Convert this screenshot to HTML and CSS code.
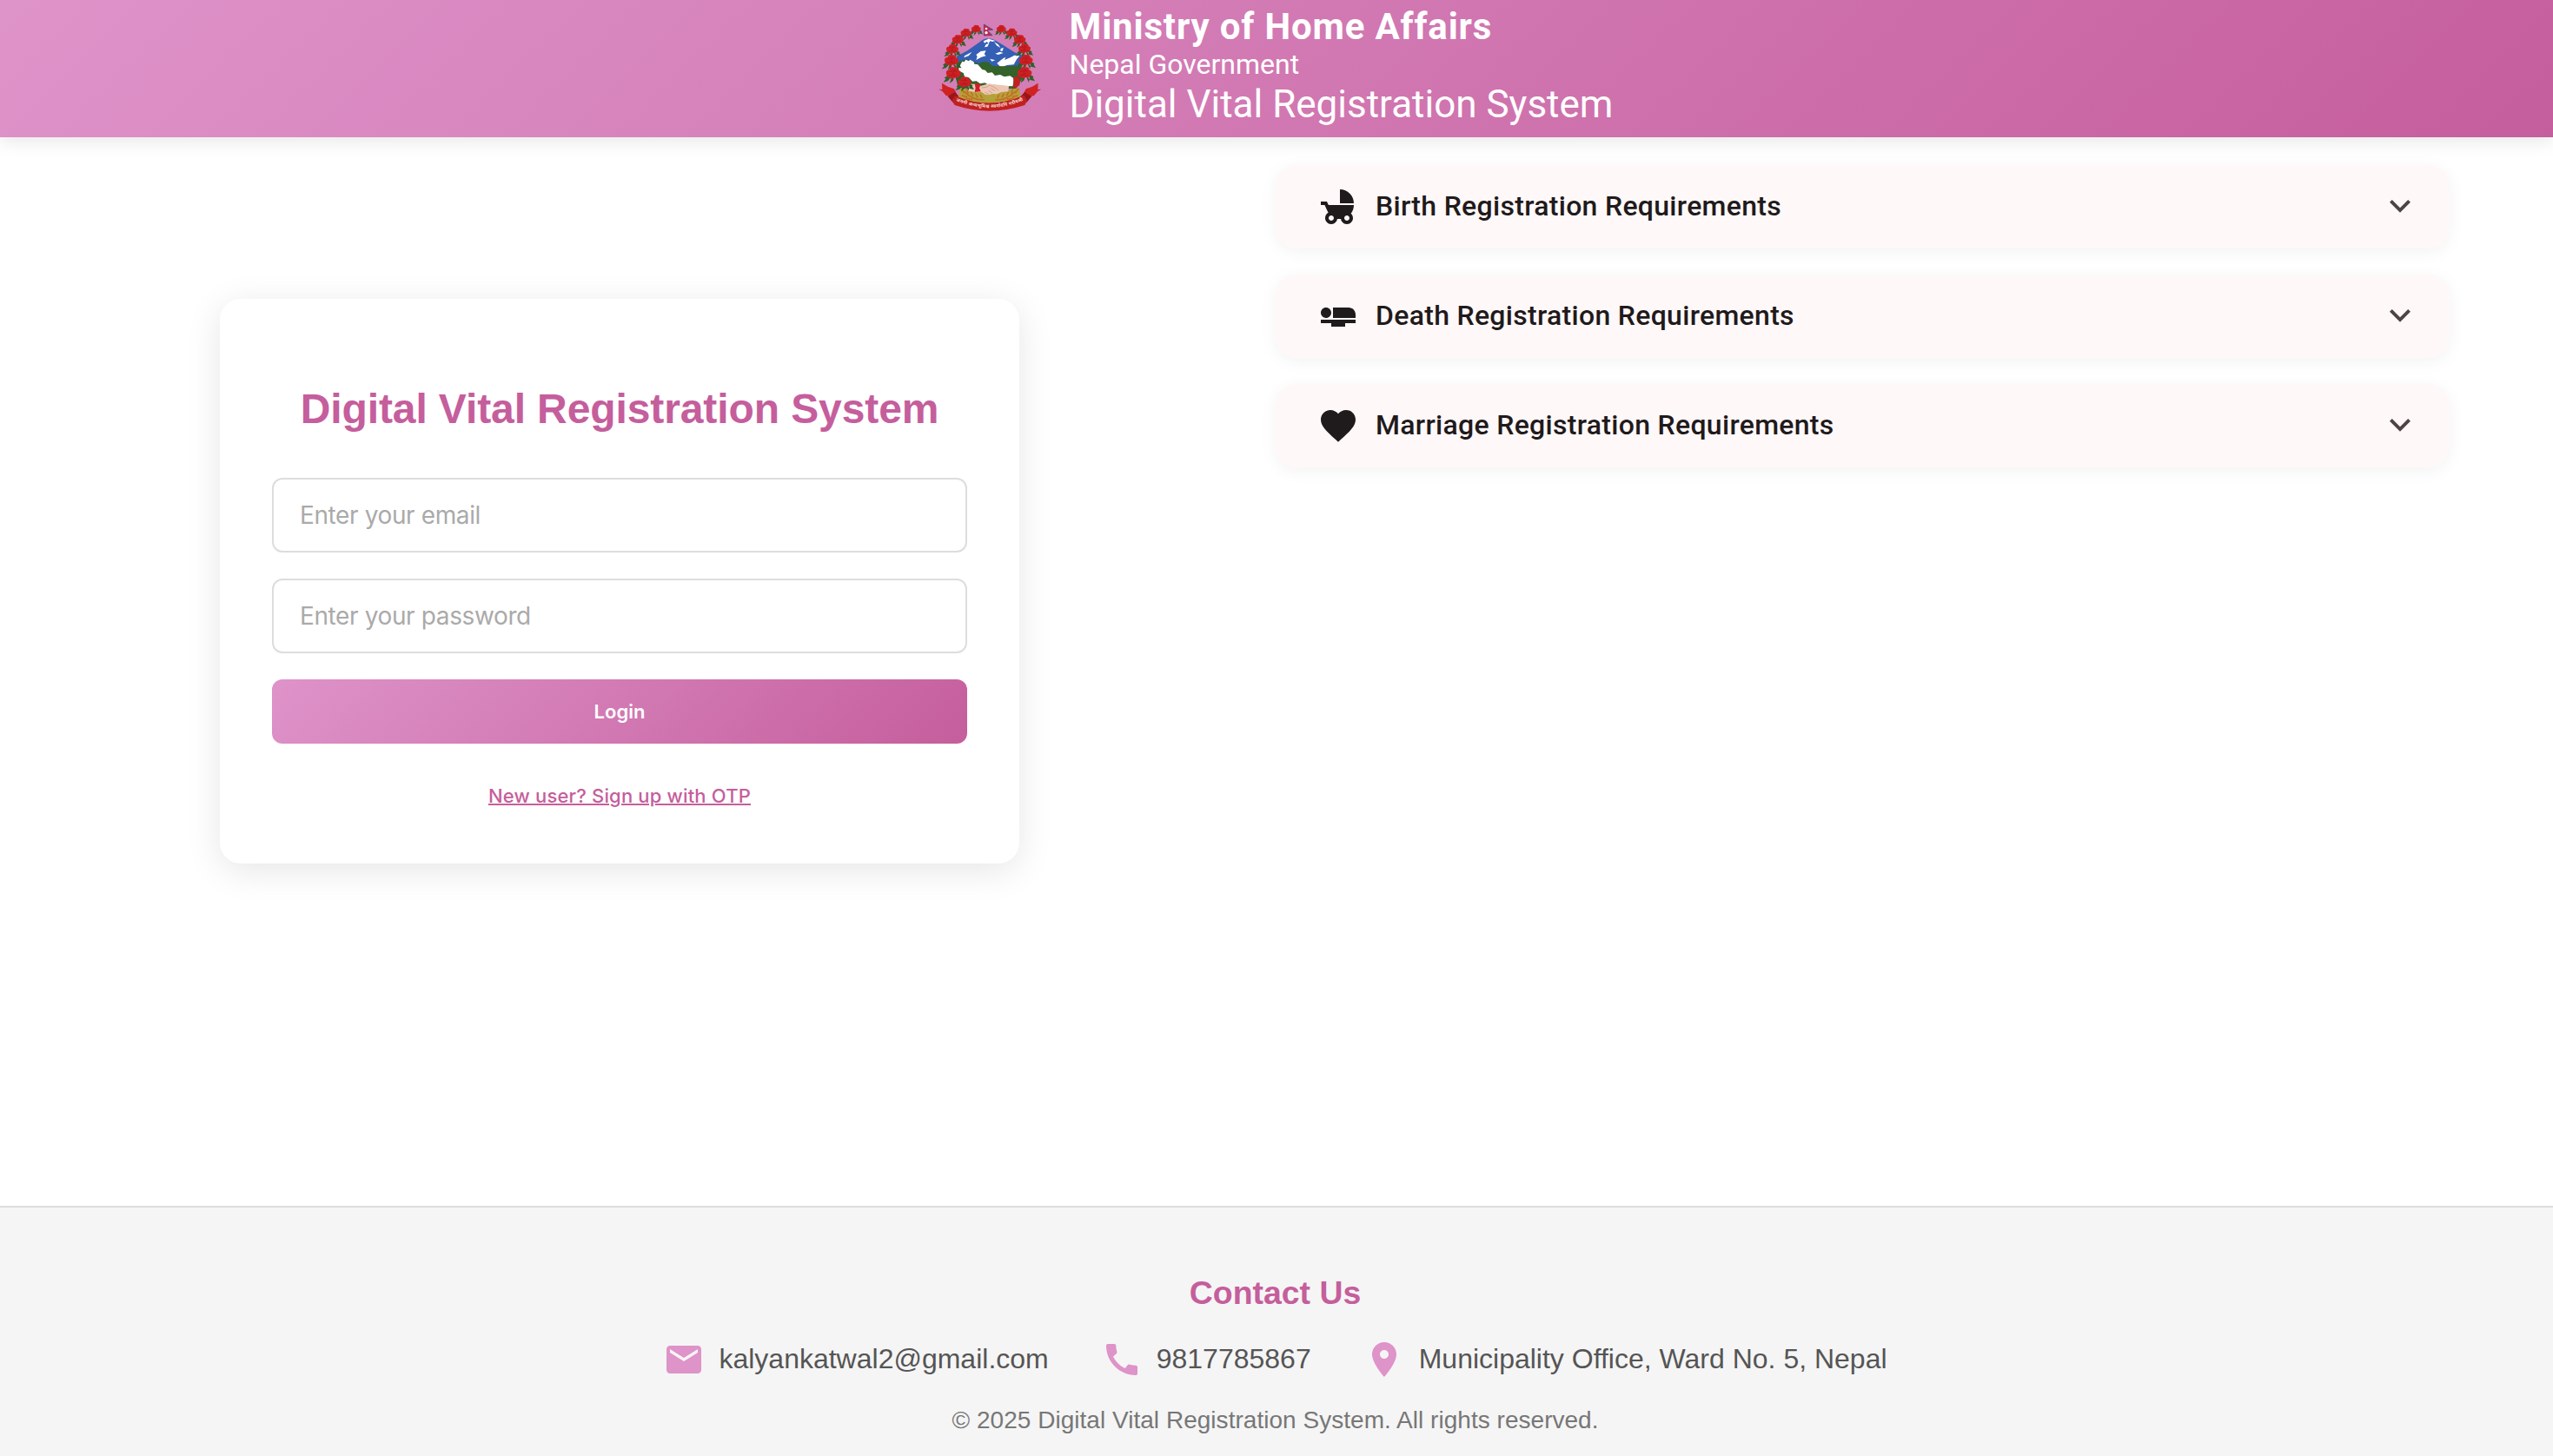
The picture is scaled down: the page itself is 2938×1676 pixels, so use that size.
FILE: index.html
```html
<!DOCTYPE html>
<html lang="en">
<head>
<meta charset="utf-8">
<title>Digital Vital Registration System</title>
<link rel="stylesheet" href="styles.css">
</head>
<body>
<header class="header">
  <svg class="emblem" viewBox="57 82 360 303" role="img" aria-label="Emblem of Nepal">
    <defs>
      <g id="flower">
        <path d="M-14 4l-12 8 4 3-7 10 13-4 8-9zM12 2l14 7-2 3 6 10-14-3-8-9zM-5 8l-6 20 10-8 3-12zM4 8l8 18 3-10-2-10z" fill="#2f5f2a"/>
        <path d="M-20 2c-3-7 2-13 8-12 1-8 10-11 14-7 7-3 12 2 12 8 7 1 9 8 5 13-2 8-10 9-14 7-6 5-13 4-16 0-5 1-9-3-9-9z" fill="#cf1f23"/>
        <path d="M-12-5q6-5 10 1 4-7 11-1M-14 4q6 6 11 0 6 7 14-1M-3-11q4 4 7-1M-4 2q4-5 8 0" fill="none" stroke="#94151a" stroke-width="1.6"/>
      </g>
      <path id="motto" d="M121 350Q236 397 354 348"/>
    </defs>
    <path d="M122 196L160 176 205 144q18-13 30-9 10-1 20 5l30 18 38 24 32 12-10 50-80 30-130-30z" fill="#345fb4"/>
    <path d="M215 143l18-8 24 7-12 3-6-3-6 9-6-6-8 5zM252 146l14 8 8 12-12-7zM224 154l11-4-6 12-10 2zM190 190l16-12 18-2-6 12 6 6-16 4-18 10 4-12zM150 194l26-14-12 14-16 6zM256 186l16-6 12 4-18 6zM274 170l10-5-2 11-7 3zM262 219l22-17 8-4-4 10 20-8 14-8 18 2-10 12-10 18-24 2-20 8zM238 204l18 5-12 4z" fill="#fff"/>
    <path d="M128 214l30-8 42 15q10-9 24-7 12 1 20 14l40 2 60-3 8 40-24 40-200-1-12-55z" fill="#33622b"/>
    <path d="M134 303l60 13 60 2 84-13 8 38q-108 48-218 5z" fill="#b3a13a"/>
    <path d="M137 222l5-9 7 2 5-8 11 5 4-5 13 8 2 7 12 2 15 17 10 2 9 10 15-2 10 11 18-3 14 7 20-3 13 9-3 27-24-1-14 3-23-7-22 1-14-8-16 3-13-9-14 1-12-13-14-2-5-14-15-7-1-9z" fill="#fff"/>
    <path d="M165 291l24 0 18 6 27-7 20 3 26 2 23 3-2 19-24 2-16 7-14-1-14 4-12-2-13-9-16 2-30-5z" fill="#edc7b4"/>
    <path d="M209 304l17-2 10-7 16 7 16 12M220 319l14 7M232 314l14 8M241 307l14 8" fill="none" stroke="#c68e78" stroke-width="2"/>
    <path d="M185 289l22 2-6 14 5 12-21 2 3-14z" fill="#d01f25"/>
    <g stroke="#c46f25" stroke-width="5" stroke-linecap="round" fill="none">
      <path d="M139 308l9 13M150 318l13 12M163 330l14 7M177 339l18 5M195 344l22 2M158 310l4 12M173 320l5 10M189 326l5 10M205 329l5 9M142 331l15 4M155 340l20 4M335 308l-9 13M324 318l-13 12M311 330l-14 7M297 339l-18 5M279 344l-22 2M316 310l-4 12M301 320l-5 10M285 326l-5 10M269 329l-5 9M332 331l-15 4M319 340l-20 4"/>
    </g>
    <path d="M61 309l12 1-1-22 20 12 22 8 14 26-18 16-12-16-12-3-12-14zM415 309l-12 1 1-22-20 12-22 8-14 26 18 16 12-16 12-3 12-14z" fill="#cf2222"/>
    <path d="M92 334l24-15 14 14-20 22zM382 334l-24-15-14 14 20 22z" fill="#961719"/>
    <path d="M118 332l4 1q114 48 230-2l4-1 10 18-8 16q-122 40-242 0l-10-16z" fill="#c12020"/>
    <g>
      <use href="#flower" transform="translate(190 102) scale(.78)"/>
      <use href="#flower" transform="translate(155 116) scale(.88)"/>
      <use href="#flower" transform="translate(127 139) scale(.96)"/>
      <use href="#flower" transform="translate(108 172)"/>
      <use href="#flower" transform="translate(105 211) scale(1.15)"/>
      <use href="#flower" transform="translate(112 255) scale(1.22)"/>
      <use href="#flower" transform="translate(150 286) scale(1.1)"/>
      <use href="#flower" transform="translate(277 102) scale(.78)"/>
      <use href="#flower" transform="translate(313 115) scale(.88)"/>
      <use href="#flower" transform="translate(341 139) scale(.96)"/>
      <use href="#flower" transform="translate(357 170)"/>
      <use href="#flower" transform="translate(362 210) scale(1.12)"/>
      <use href="#flower" transform="translate(357 254) scale(1.2)"/>
    </g>
    <path d="M318 268l14-3 10 12-2 18-14 10-10-4 4-16z" fill="#c41f22"/>
    <path d="M217 85l31 19-20 1 18 18-29 1z" fill="#d3243f" stroke="#47468c" stroke-width="2.4"/>
    <circle cx="225" cy="100" r="4" fill="#fff"/><circle cx="225" cy="114" r="5" fill="#fff"/>
    <text class="motto"><textPath href="#motto" textLength="238">जननी जन्मभूमिश्च स्वर्गादपि गरीयसी</textPath></text>
  </svg>
  <div class="header-text">
    <div class="ministry">Ministry of Home Affairs</div>
    <div class="government">Nepal Government</div>
    <div class="system">Digital Vital Registration System</div>
  </div>
</header>

<main class="main">
  <section class="login-side">
    <form class="login-card">
      <h1 class="login-title">Digital Vital Registration System</h1>
      <input class="field" type="email" placeholder="Enter your email">
      <input class="field" type="password" placeholder="Enter your password">
      <button class="login-button" type="button">Login</button>
      <a class="signup" href="#">New user? Sign up with OTP</a>
    </form>
  </section>
  <section class="requirements">
    <div class="panel">
      <svg class="icon" viewBox="0 0 24 24"><path d="M13 2v8h8c0-4.42-3.58-8-8-8zm6.32 13.89C20.37 14.54 21 12.84 21 11H6.44l-.95-2H2v2h2.22s1.89 4.07 2.12 4.42c-1.1.59-1.84 1.75-1.84 3.08C4.5 20.43 6.07 22 8 22c1.76 0 3.22-1.3 3.46-3h2.08c.24 1.7 1.7 3 3.46 3 1.93 0 3.5-1.57 3.5-3.5 0-1.04-.46-1.97-1.18-2.61zM8 20c-.83 0-1.5-.67-1.5-1.5S7.17 17 8 17s1.5.67 1.5 1.5S8.83 20 8 20zm9 0c-.83 0-1.5-.67-1.5-1.5S16.17 17 17 17s1.5.67 1.5 1.5S17.83 20 17 20z"/></svg>
      <span class="panel-title">Birth Registration Requirements</span>
      <svg class="chevron" viewBox="0 -960 960 960"><path d="M480-345 240-585l56-56 184 184 184-184 56 56-240 240Z"/></svg>
    </div>
    <div class="panel">
      <svg class="icon" viewBox="0 0 24 24"><path d="M22 11v2H9V7h9c2.21 0 4 1.79 4 4zM2 14v2h6v2h8v-2h6v-2H2zm5.14-1.9c1.16-1.19 1.14-3.08-.04-4.24-1.19-1.16-3.08-1.14-4.24.04-1.16 1.19-1.14 3.08.04 4.24 1.19 1.16 3.08 1.14 4.24-.04z"/></svg>
      <span class="panel-title">Death Registration Requirements</span>
      <svg class="chevron" viewBox="0 -960 960 960"><path d="M480-345 240-585l56-56 184 184 184-184 56 56-240 240Z"/></svg>
    </div>
    <div class="panel">
      <svg class="icon" viewBox="0 0 24 24"><path d="M12 21.35l-1.45-1.32C5.4 15.36 2 12.28 2 8.5 2 5.42 4.42 3 7.5 3c1.74 0 3.41.81 4.5 2.09C13.09 3.81 14.76 3 16.5 3 19.58 3 22 5.42 22 8.5c0 3.78-3.4 6.86-8.55 11.54L12 21.35z"/></svg>
      <span class="panel-title">Marriage Registration Requirements</span>
      <svg class="chevron" viewBox="0 -960 960 960"><path d="M480-345 240-585l56-56 184 184 184-184 56 56-240 240Z"/></svg>
    </div>
  </section>
</main>

<footer class="footer">
  <h2 class="contact-title">Contact Us</h2>
  <div class="contacts">
    <div class="contact">
      <svg class="contact-icon" viewBox="0 0 24 24"><path d="M20 4H4c-1.1 0-1.99.9-1.99 2L2 18c0 1.1.9 2 2 2h16c1.1 0 2-.9 2-2V6c0-1.1-.9-2-2-2zm0 4l-8 5-8-5V6l8 5 8-5v2z"/></svg>
      <span class="contact-text">kalyankatwal2@gmail.com</span>
    </div>
    <div class="contact">
      <svg class="contact-icon" viewBox="0 0 24 24"><path d="M20.01 15.38c-1.23 0-2.42-.2-3.53-.56-.35-.12-.74-.03-1.01.24l-1.57 1.97c-2.83-1.35-5.48-3.9-6.89-6.83l1.95-1.66c.27-.28.35-.67.24-1.02-.37-1.11-.56-2.3-.56-3.53 0-.54-.45-.99-.99-.99H4.19C3.65 3 3 3.24 3 3.99 3 13.28 10.73 21 20.01 21c.71 0 .99-.63.99-1.18v-3.45c0-.54-.45-.99-.99-.99z"/></svg>
      <span class="contact-text">9817785867</span>
    </div>
    <div class="contact">
      <svg class="contact-icon" viewBox="0 0 24 24"><path d="M12 2C8.13 2 5 5.13 5 9c0 5.25 7 13 7 13s7-7.75 7-13c0-3.87-3.13-7-7-7zm0 9.5c-1.38 0-2.5-1.12-2.5-2.5s1.12-2.5 2.5-2.5 2.5 1.12 2.5 2.5-1.12 2.5-2.5 2.5z"/></svg>
      <span class="contact-text">Municipality Office, Ward No. 5, Nepal</span>
    </div>
  </div>
  <p class="copyright">© 2025 Digital Vital Registration System. All rights reserved.</p>
</footer>
</body>
</html>
```

FILE: styles.css
```css
* { box-sizing: border-box; }

body {
  margin: 0;
  height: 1676px;
  display: flex;
  flex-direction: column;
  background: #fff;
  font-family: "Liberation Sans", Arial, sans-serif;
}

.header {
  height: 158px;
  flex: none;
  display: flex;
  justify-content: center;
  align-items: flex-start;
  gap: 32px;
  padding-right: 3px;
  background: linear-gradient(135deg, #de93c9, #c55e9c);
  box-shadow: 0 4px 20px rgba(0, 0, 0, 0.1);
  color: #fff;
  font-family: Roboto, sans-serif;
}

.emblem { width: 120px; height: 101px; margin-top: 27px; }
.motto { font: bold 16px "Noto Sans Devanagari", "Noto Sans", sans-serif; fill: #f6dcd6; }

.header-text { padding-top: 5px; white-space: nowrap; }
.ministry { font-size: 42px; line-height: 51px; font-weight: 700; letter-spacing: 0.84px; }
.government { font-size: 32px; line-height: 36px; }
.system { font-size: 44px; line-height: 56px; }

.main {
  flex: 1;
  display: grid;
  grid-template-columns: 1468px 1351px;
  align-items: start;
}

.login-side {
  display: flex;
  justify-content: center;
  padding: 186px 42px 0 0;
}

.login-card {
  width: 920px;
  height: 650px;
  padding: 96px 60px 0;
  display: flex;
  flex-direction: column;
  align-items: center;
  background: #fff;
  border-radius: 24px;
  box-shadow: 0 8px 40px rgba(0, 0, 0, 0.1);
}

.login-title {
  margin: 0 0 48px;
  font-size: 48px;
  line-height: 62px;
  letter-spacing: -0.1px;
  color: #c55e9c;
  white-space: nowrap;
}

.field {
  width: 800px;
  height: 86px;
  margin: 0 0 30px;
  padding: 0 30px;
  border: 2px solid #ddd;
  border-radius: 12px;
  background: #fff;
  font: 28px Inter, sans-serif;
  letter-spacing: -0.38px;
}
.field::placeholder { color: #aaa; }

.login-button {
  width: 800px;
  height: 74px;
  border: 0;
  border-radius: 12px;
  background: linear-gradient(135deg, #de93c9, #c55e9c);
  color: #fff;
  font: 600 22px Inter, sans-serif;
}

.signup {
  margin-top: 46px;
  font: 500 22px/28px Inter, sans-serif;
  letter-spacing: 0.17px;
  color: #c55e9c;
  text-decoration: underline;
  text-decoration-thickness: 2px;
}

.requirements {
  display: flex;
  flex-direction: column;
  gap: 30px;
  padding-top: 32px;
}

.panel {
  height: 96px;
  padding: 0 33px 0 48px;
  display: flex;
  align-items: center;
  border-radius: 24px;
  background: #fff8f8;
  box-shadow: 0 4px 20px rgba(0, 0, 0, 0.05);
}
.icon { width: 48px; height: 48px; fill: #1f1a1c; }
.panel-title {
  flex: 1;
  margin-left: 19px;
  padding-bottom: 2px;
  font: 500 32px/48px Roboto, sans-serif;
  letter-spacing: 0.3px;
  color: #1f1a1c;
}
.chevron { width: 48px; height: 48px; fill: #4e4447; }

.footer {
  height: 288px;
  flex: none;
  display: flex;
  flex-direction: column;
  align-items: center;
  padding: 76px 3px 0 0;
  border-top: 2px solid #ddd;
  background: #f5f5f5;
}
.contact-title {
  margin: 0;
  font-size: 37.4px;
  line-height: 44px;
  color: #c55e9c;
}
.contacts {
  display: flex;
  gap: 60px;
  margin-top: 31px;
}
.contact {
  display: flex;
  align-items: center;
  gap: 16px;
  color: #555;
}
.contact-icon { width: 48px; height: 48px; fill: #de93c9; }
.contact-text {
  font-size: 32px;
  line-height: 44px;
  padding-bottom: 3px;
}
.copyright {
  margin: 30px 0 0;
  font-size: 28px;
  line-height: 32px;
  letter-spacing: 0.03px;
  color: #777;
}
```
